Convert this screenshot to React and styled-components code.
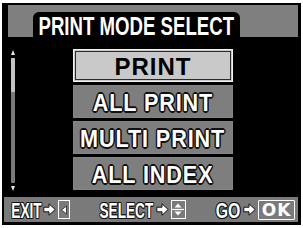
import React from "react";
import styled, { createGlobalStyle, css } from "styled-components";

const GlobalStyle = createGlobalStyle`
  html, body {
    margin: 0;
    padding: 0;
    background: #ffffff;
  }
  body {
    font-family: "Liberation Sans", Arial, sans-serif;
  }
`;

const outline = (w) => css`
  text-shadow: -${w}px 0 #111, ${w}px 0 #111, 0 -${w}px #111, 0 ${w}px #111,
    -${w * 0.7}px -${w * 0.7}px #111, ${w * 0.7}px -${w * 0.7}px #111,
    -${w * 0.7}px ${w * 0.7}px #111, ${w * 0.7}px ${w * 0.7}px #111;
`;

const items = ["PRINT", "ALL PRINT", "MULTI PRINT", "ALL INDEX"];

export default function App() {
  return (
    <>
      <GlobalStyle />
      <Screen>
        <Header>
          <TitleTab>
            <Squeeze $sx={0.745}>PRINT MODE SELECT</Squeeze>
          </TitleTab>
        </Header>
        <Body>
          <ScrollBar>
            <ScrollArrow $dir="up" />
            <Track>
              <Thumb />
            </Track>
            <ScrollArrow $dir="down" />
          </ScrollBar>
          <Menu>
            {items.map((label, i) => (
              <MenuButton key={label} $selected={i === 0}>
                <Squeeze $sx={i === 0 ? 1 : 0.9}>{label}</Squeeze>
              </MenuButton>
            ))}
          </Menu>
        </Body>
        <Footer>
          <Hint>
            <HintLabel $w={30}>
              <Squeeze $sx={0.62}>EXIT</Squeeze>
            </HintLabel>
            <Arrow />
            <KeyBox $w={12}>
              <svg width="8" height="10" viewBox="0 0 8 10">
                <polygon points="6.5,1 1.5,5 6.5,9" fill="#fff" stroke="#222" strokeWidth="0.8" />
              </svg>
            </KeyBox>
          </Hint>
          <Hint>
            <HintLabel $w={54}>
              <Squeeze $sx={0.62}>SELECT</Squeeze>
            </HintLabel>
            <Arrow />
            <KeyBox $w={15}>
              <svg width="12" height="17" viewBox="0 0 12 17">
                <polygon points="2.5,6.5 6,2.5 9.5,6.5" fill="#fff" />
                <line x1="0" y1="8.5" x2="12" y2="8.5" stroke="#fff" strokeWidth="1.2" />
                <polygon points="2.5,10.5 6,14.5 9.5,10.5" fill="#fff" />
              </svg>
            </KeyBox>
          </Hint>
          <Hint>
            <HintLabel $w={26}>
              <Squeeze $sx={0.72}>GO</Squeeze>
            </HintLabel>
            <Arrow />
            <OkBox>OK</OkBox>
          </Hint>
        </Footer>
      </Screen>
    </>
  );
}

function Arrow() {
  return (
    <ArrowIcon width="13" height="13" viewBox="0 0 13 13">
      <polygon
        points="0.8,4.2 6,4.2 6,0.8 12.2,6.5 6,12.2 6,8.8 0.8,8.8"
        fill="#fff"
        stroke="#111"
        strokeWidth="1"
        strokeLinejoin="round"
      />
    </ArrowIcon>
  );
}

const Screen = styled.div`
  width: 299px;
  height: 222px;
  margin: 3px 0 0 2px;
  background: #000;
  display: flex;
  flex-direction: column;
  overflow: hidden;
`;

const Header = styled.div`
  height: 32px;
  margin: 2px 3px 0 6px;
  background: #7f7f7f;
  display: flex;
  align-items: flex-end;
  padding-left: 25px;
`;

const TitleTab = styled.div`
  width: 207px;
  height: 25px;
  background: #000;
  border-radius: 6px 6px 0 0;
  display: flex;
  align-items: center;
  justify-content: center;
  color: #fff;
  font-weight: bold;
  font-size: 25px;
  line-height: 1;
  padding-top: 3px;
  box-sizing: border-box;
  white-space: nowrap;
`;

const Squeeze = styled.span`
  display: inline-block;
  transform: scaleX(${(p) => p.$sx});
  transform-origin: center;
  white-space: nowrap;
`;

const Body = styled.div`
  height: 160px;
  display: flex;
  padding: 12px 0 0 8px;
  box-sizing: border-box;
`;

const ScrollBar = styled.div`
  width: 5px;
  margin-top: 1px;
  height: 141px;
  display: flex;
  flex-direction: column;
  align-items: center;
  gap: 2px;
`;

const ScrollArrow = styled.div`
  width: 0;
  height: 0;
  border-left: 2.5px solid transparent;
  border-right: 2.5px solid transparent;
  ${(p) =>
    p.$dir === "up"
      ? "border-bottom: 5px solid #e6e6e6;"
      : "border-top: 5px solid #e6e6e6;"}
`;

const Track = styled.div`
  flex: 1;
  width: 4px;
  background: #7a7a7a;
  border-radius: 1px;
  display: flex;
  flex-direction: column;
  margin: 1px 0;
`;

const Thumb = styled.div`
  height: 34px;
  background: #c4c4c4;
  border-radius: 1px;
`;

const Menu = styled.div`
  margin-left: 58px;
  width: 160px;
  display: flex;
  flex-direction: column;
  gap: 3px;
`;

const MenuButton = styled.div`
  height: 33px;
  box-sizing: border-box;
  display: flex;
  align-items: center;
  justify-content: center;
  font-weight: bold;
  font-size: 24px;
  letter-spacing: 1px;
  line-height: 1;
  padding-top: 2px;
  white-space: nowrap;
  background: ${(p) => (p.$selected ? "#c9c9c9" : "#7e7e7e")};
  color: ${(p) => (p.$selected ? "#000" : "#fff")};
  border: 1px solid ${(p) => (p.$selected ? "#f2f2f2" : "#848484")};
  box-shadow: ${(p) =>
    p.$selected ? "inset 0 0 0 1px #c9c9c9, inset 0 0 0 2px #2a2a2a" : "none"};
  ${(p) => !p.$selected && outline(1.6)}
`;

const Footer = styled.div`
  height: 25px;
  margin: 0 3px 0 2px;
  background: #7a7a7a;
  display: flex;
  align-items: center;
  justify-content: space-between;
  padding: 0 3px 0 7px;
`;

const Hint = styled.div`
  display: flex;
  align-items: center;
  gap: 1px;
`;

const HintLabel = styled.span`
  width: ${(p) => p.$w}px;
  display: flex;
  justify-content: center;
  color: #fff;
  font-weight: bold;
  font-size: 22px;
  line-height: 1;
  padding-top: 2px;
  ${outline(1.3)}
`;

const ArrowIcon = styled.svg`
  display: block;
  margin: 0 1px;
`;

const KeyBox = styled.div`
  width: ${(p) => p.$w}px;
  height: 19px;
  box-sizing: border-box;
  border: 1.5px solid #fff;
  display: flex;
  align-items: center;
  justify-content: center;
`;

const OkBox = styled.div`
  width: 37px;
  height: 20px;
  box-sizing: border-box;
  border: 1.5px solid #fff;
  border-radius: 1px;
  display: flex;
  align-items: center;
  justify-content: center;
  color: #fff;
  font-family: "DejaVu Sans", sans-serif;
  font-weight: bold;
  font-size: 17px;
  letter-spacing: 1px;
  line-height: 1;
  padding-top: 1px;
`;
